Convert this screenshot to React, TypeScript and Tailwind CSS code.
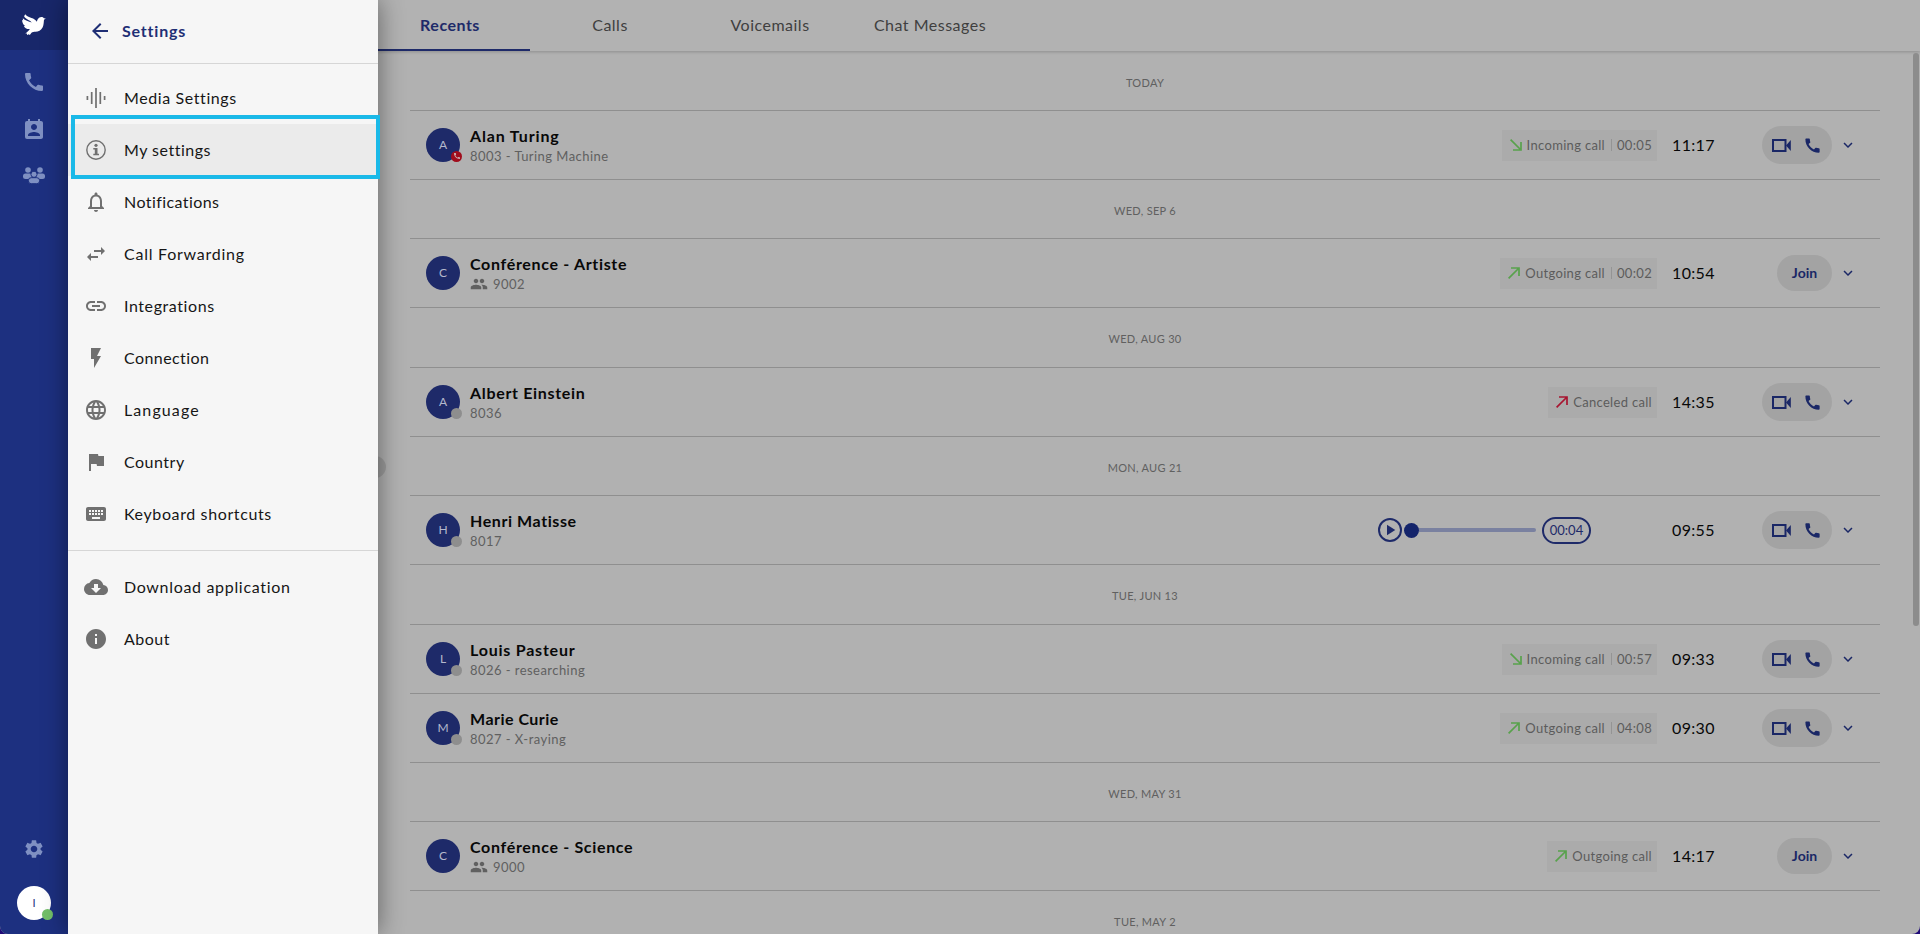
import {
  MdArrowBack, MdCall, MdCloudDownload, MdFlag, MdFlashOn, MdGroup, MdInfo, MdInsertLink, MdKeyboard,
  MdLanguage, MdPermContactCalendar, MdSettings, MdSwapHoriz, MdNotificationsNone, MdPlayArrow, MdKeyboardArrowDown,
} from "react-icons/md";
import type { ReactNode } from "react";

type Status = "busy" | "offline" | "none";
type Call = {
  name: string; detail: string; status: Status; time: string; spacing: string;
  kind?: "in" | "out" | "canceled"; label?: string; duration?: string; voicemail?: string;
};
type Group = { date: string; head: string; calls: Call[] };

const groups: Group[] = [
  { date: "TODAY", head: "h-[59px]", calls: [
    { name: "Alan Turing", detail: "8003 - Turing Machine", status: "busy", time: "11:17", kind: "in", label: "Incoming call", duration: "00:05", spacing: "tracking-[0.85px]" }] },
  { date: "WED, SEP 6", head: "h-[59px]", calls: [
    { name: "Conférence - Artiste", detail: "9002", status: "none", time: "10:54", kind: "out", label: "Outgoing call", duration: "00:02", spacing: "tracking-[0.67px]" }] },
  { date: "WED, AUG 30", head: "h-[60px]", calls: [
    { name: "Albert Einstein", detail: "8036", status: "offline", time: "14:35", kind: "canceled", label: "Canceled call", spacing: "tracking-[0.67px]" }] },
  { date: "MON, AUG 21", head: "h-[59px]", calls: [
    { name: "Henri Matisse", detail: "8017", status: "offline", time: "09:55", voicemail: "00:04", spacing: "tracking-[0.58px]" }] },
  { date: "TUE, JUN 13", head: "h-[60px]", calls: [
    { name: "Louis Pasteur", detail: "8026 - researching", status: "offline", time: "09:33", kind: "in", label: "Incoming call", duration: "00:57", spacing: "tracking-[0.78px]" },
    { name: "Marie Curie", detail: "8027 - X-raying", status: "offline", time: "09:30", kind: "out", label: "Outgoing call", duration: "04:08", spacing: "tracking-[0.48px]" }] },
  { date: "WED, MAY 31", head: "h-[59px]", calls: [
    { name: "Conférence - Science", detail: "9000", status: "none", time: "14:17", kind: "out", label: "Outgoing call", spacing: "tracking-[0.67px]" }] },
  { date: "TUE, MAY 2", head: "h-[59px]", calls: [] },
];

function Dove() {
  return (
    <svg viewBox="0 0 24 22" className="h-[22px] w-6" fill="#fff">
      <path d="M3.2.3C4.500 2.300 7 3.200 9.500 4c2.200.7 4.300 1.900 5.300 3.800.6-2.300 1.700-4.800 4.500-4.900 1.200 0 2.100.5 2.600 1.300l1.900.4-1.800 1.200c-.3 2.200-.1 4.800-1.300 7.400-1.500 3.300-4.500 4.400-7.300 4.500-1.500.1-2.900 0-3.900 1l-1.700 2.400-1-.9-1.700.9-.2-1.500-1.600-.1c2-1.300 3.600-2.700 4.500-4.400-2.900.2-5.200-1-5.900-3.100l1.300.1C1.300 10.700.1 8.600.1 5.700l1.100.9C.9 5.700.8 5 .9 4.300c2 2.300 5.700 3.100 8.800 4.200-2-2.400-6.400-3.500-7.600-6.200Z" />
    </svg>
  );
}

function People() {
  return (
    <svg viewBox="0 0 22 17" className="h-[17px] w-[22px]" fill="currentColor">
      <circle cx="5" cy="3" r="2.800" /><circle cx="17" cy="3" r="2.800" />
      <rect x="0" y="6.500" width="9" height="5.500" rx="2.500" /><rect x="13" y="6.500" width="9" height="5.500" rx="2.500" />
      <g stroke="#1d3080" strokeWidth="1">
        <circle cx="11" cy="7.300" r="3.100" /><rect x="5.400" y="10.700" width="11.200" height="6" rx="2.800" />
      </g>
    </svg>
  );
}

function Waves() {
  return (
    <svg viewBox="0 0 20 20" className="size-5" stroke="currentColor" strokeWidth="1.700">
      <path d="M1.400 8v4M5.700 4v12M10 0v20M14.300 4v12M18.600 8v4" />
    </svg>
  );
}

function InfoOutline() {
  return (
    <svg viewBox="0 0 20 20" className="size-5" fill="currentColor">
      <circle cx="10" cy="10" r="9.200" fill="none" stroke="currentColor" strokeWidth="1.400" />
      <circle cx="10" cy="5.300" r="1.600" />
      <path d="M7.300 8h4.200v5.700H13v1.600H7.300v-1.600h1.500V9.600H7.300Z" />
    </svg>
  );
}

function DirectionArrow({ kind }: { kind: "in" | "out" | "canceled" }) {
  const color = kind === "canceled" ? "text-[#a81430]" : "text-[#58a24c]";
  return (
    <svg viewBox="0 0 12 12" className={`size-3 ${color}`} fill="none" stroke="currentColor" strokeWidth="1.700">
      {kind === "in" ? <path d="M.6.6 11 11M11 3v8H3" /> : <path d="M.6 11.400 11 1M11 9V1H3" />}
    </svg>
  );
}

function Camera() {
  return (
    <svg viewBox="0 0 19 13" className="h-[13px] w-[19px]">
      <path d="M1 1h12.500v11H1Z" fill="none" stroke="currentColor" strokeWidth="2" />
      <path d="M14 6.500 18.800 1v11Z" fill="currentColor" />
    </svg>
  );
}

function RailButton({ children, className }: { children: ReactNode; className: string }) {
  return <div className={`flex items-center justify-center text-[#7f90c2] ${className}`}>{children}</div>;
}

function MenuItem({ icon, label, active, className }: { icon: ReactNode; label: string; active?: boolean; className: string }) {
  return (
    <div className={`flex h-[52px] items-center pl-4 ${active ? "bg-[#ebebeb]" : ""}`}>
      <span className="flex w-6 justify-center text-[#707070]">{icon}</span>
      <span className={`ml-4 text-base text-[#161616] ${className}`}>{label}</span>
    </div>
  );
}

function CallRow({ call }: { call: Call }) {
  const conference = call.status === "none";
  return (
    <div className="flex h-[69px] items-center border-b border-[#8f8f8f] pr-[23px] pl-4">
      <div className="relative mb-px flex size-[34px] items-center justify-center rounded-full bg-[#1e2a69] text-xs text-[#b4b8cc]">
        {call.name[0]}
        {!conference && (
          <span className={`absolute -right-0.5 bottom-0 flex size-[11px] items-center justify-center rounded-full ${call.status === "busy" ? "bg-[#a00d1c]" : "bg-[#8e8e8e]"}`}>
            {call.status === "busy" && <MdCall className="size-2 text-[#c9b0b2]" />}
          </span>
        )}
      </div>
      <div className="ml-2.5 flex flex-col pt-0.5">
        <span className={`text-base leading-5 font-bold text-[#080808] ${call.spacing}`}>{call.name}</span>
        <span className="flex items-center text-[13px] leading-5 tracking-[0.45px] text-[#606060]">
          {conference && <MdGroup className="mr-[5px] size-[18px]" />}
          {call.detail}
        </span>
      </div>
      <div className="ml-auto flex items-center">
        {call.kind && (
          <div className="flex h-[31px] items-center bg-[#ababab] pr-[5px] pl-2 text-[13px] tracking-[0.32px] text-[#5c5c5c]">
            <DirectionArrow kind={call.kind} />
            <span className="ml-[5px] pt-0.5">{call.label}</span>
            {call.duration && <span className="ml-1.5 h-3 w-px bg-[#949494]" />}
            {call.duration && <span className="ml-[5px] pt-0.5">{call.duration}</span>}
          </div>
        )}
        {call.voicemail && (
          <div className="mr-[66px] flex items-center text-[#1e2a69]">
            <span className="flex size-6 items-center justify-center rounded-full border-2 border-current"><MdPlayArrow className="size-[18px]" /></span>
            <span className="ml-0.5 size-[15px] rounded-full bg-[#14246b]" />
            <span className="h-1 w-[117px] rounded-r-full bg-[#7a81a0]" />
            <span className="ml-1.5 flex h-[27px] w-[49px] items-center justify-center rounded-full border-2 border-current pt-px text-[13px]">{call.voicemail}</span>
          </div>
        )}
        <span className="ml-[15px] w-[43px] text-base tracking-[0.35px] text-[#080808]">{call.time}</span>
        <div className="flex w-[117px] justify-end text-[#1a2766]">
          {conference ? (
            <span className="flex h-9 w-[55px] items-center justify-center rounded-full bg-[#a3a3a3] text-sm font-bold">Join</span>
          ) : (
            <span className="flex h-[38px] w-[70px] items-center justify-center gap-3 rounded-full bg-[#a3a3a3]"><Camera /><MdCall className="size-[19px]" /></span>
          )}
        </div>
        <MdKeyboardArrowDown className="ml-[7px] size-[18px] text-[#1a2766]" />
      </div>
    </div>
  );
}

export default function App() {
  return (
    <div className="h-[934px] w-[1920px] bg-[#1f0a78]">
      <div className="relative flex h-full overflow-hidden rounded-b-lg bg-[#b1b1b1] font-['Lato',sans-serif]">
        <aside className="flex w-[68px] shrink-0 flex-col bg-[#1d3080]">
          <div className="flex h-[50px] items-center justify-center bg-[#18276a]"><Dove /></div>
          <RailButton className="mt-5 h-6"><MdCall className="size-6" /></RailButton>
          <RailButton className="mt-6 h-6"><MdPermContactCalendar className="size-6" /></RailButton>
          <RailButton className="mt-[21px] h-6"><People /></RailButton>
          <RailButton className="mt-auto h-6"><MdSettings className="size-[22px]" /></RailButton>
          <div className="mt-[25px] mb-3.5 flex justify-center">
            <div className="relative flex size-[34px] items-center justify-center rounded-full bg-white text-[11px] text-[#1d3080]">
              I
              <span className="absolute -right-0.5 bottom-0 size-[11px] rounded-full bg-[#72bf68]" />
            </div>
          </div>
        </aside>

        <nav className="relative z-10 w-[310px] shrink-0 bg-[#f6f6f6] shadow-[0_0_24px_rgba(0,0,0,0.45)]">
          <header className="flex h-16 items-center border-b border-[#d6d6d6] pb-0.5 pl-5 text-[#1f2f75]">
            <MdArrowBack className="size-6" />
            <span className="ml-2.5 text-base font-bold tracking-[0.8px]">Settings</span>
          </header>
          <div className="pt-2">
            <MenuItem icon={<Waves />} label="Media Settings" className="tracking-[0.6px]" />
            <MenuItem icon={<InfoOutline />} label="My settings" active className="tracking-[0.5px]" />
            <MenuItem icon={<MdNotificationsNone className="size-6" />} label="Notifications" className="tracking-[0.42px]" />
            <MenuItem icon={<MdSwapHoriz className="size-6" />} label="Call Forwarding" className="tracking-[0.75px]" />
            <MenuItem icon={<MdInsertLink className="size-6" />} label="Integrations" className="tracking-[0.58px]" />
            <MenuItem icon={<MdFlashOn className="size-6" />} label="Connection" className="tracking-[0.42px]" />
            <MenuItem icon={<MdLanguage className="size-6" />} label="Language" className="tracking-[1.1px]" />
            <MenuItem icon={<MdFlag className="size-6" />} label="Country" className="tracking-[0.5px]" />
            <MenuItem icon={<MdKeyboard className="size-6" />} label="Keyboard shortcuts" className="tracking-[0.62px]" />
          </div>
          <div className="mt-2.5 border-t border-[#d6d6d6] pt-2.5">
            <MenuItem icon={<MdCloudDownload className="size-6" />} label="Download application" className="tracking-[0.68px]" />
            <MenuItem icon={<MdInfo className="size-6" />} label="About" className="tracking-[0.5px]" />
          </div>
          <div className="absolute top-[115px] left-[3px] h-16 w-[309px] border-4 border-[#1ab9e8]" />
        </nav>

        <main className="relative flex min-w-0 flex-1 flex-col">
          <div className="flex h-[51px] shrink-0 bg-[#b2b2b2] text-base tracking-[0.5px] text-[#3f3f3f] shadow-[0_1px_3px_rgba(0,0,0,0.2)]">
            <div className="flex w-[152px] items-center justify-center border-b-2 border-[#1e2a69] pr-2 font-bold text-[#1e2a69]">Recents</div>
            <div className="flex w-40 items-center justify-center pb-0.5">Calls</div>
            <div className="flex w-40 items-center justify-center pb-0.5">Voicemails</div>
            <div className="flex w-40 items-center justify-center pb-0.5">Chat Messages</div>
          </div>
          <div className="min-h-0 flex-1 overflow-hidden pt-px pr-10 pl-8">
            {groups.map((group) => (
              <section key={group.date}>
                <div className={`flex items-center justify-center pt-1 text-[11px] tracking-[0.3px] text-[#606060] ${group.head} ${group.calls.length ? "border-b border-[#8f8f8f]" : ""}`}>{group.date}</div>
                {group.calls.map((call) => <CallRow key={call.name} call={call} />)}
              </section>
            ))}
          </div>
          <span className="absolute top-[456px] -left-3.5 size-[22px] rounded-full bg-[#9c9c9c]" />
          <span className="absolute top-[53px] right-px h-[573px] w-1.5 rounded-full bg-[#8c8c8c]" />
        </main>
      </div>
    </div>
  );
}
